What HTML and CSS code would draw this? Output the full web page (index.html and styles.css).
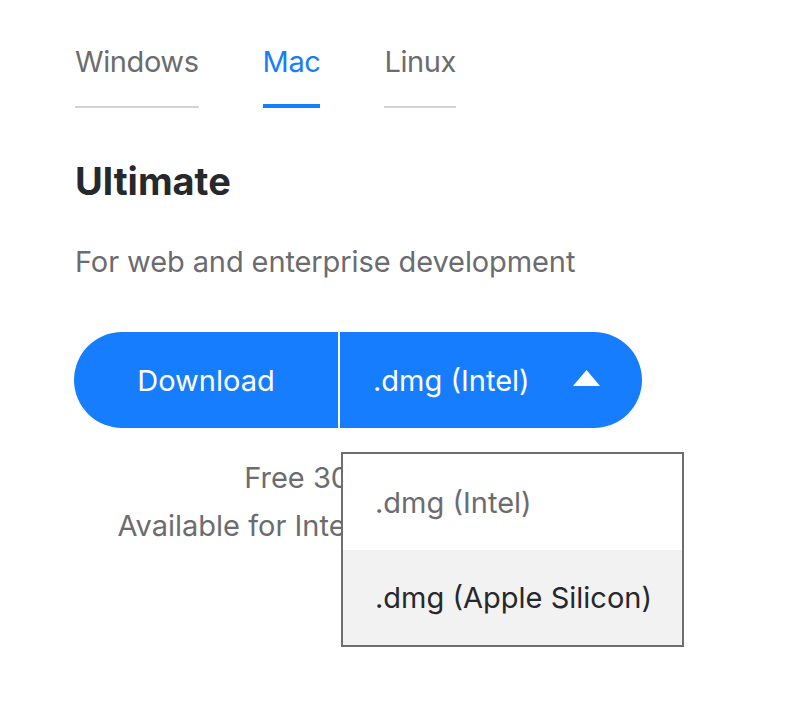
FILE: index.html
```html
<!DOCTYPE html>
<html lang="en">
<head>
<meta charset="utf-8">
<title>Download</title>
<link rel="stylesheet" href="styles.css">
</head>
<body>
<main class="page">
  <nav class="tabs">
    <a class="tab">Windows</a>
    <a class="tab tab-active">Mac</a>
    <a class="tab">Linux</a>
  </nav>
  <h2 class="edition">Ultimate</h2>
  <p class="desc">For web and enterprise development</p>
  <div class="download">
    <div class="split">
      <button class="split-main">Download</button>
      <span class="split-divider"></span>
      <button class="split-select">
        <span>.dmg (Intel)</span>
        <svg class="caret" width="27" height="16" viewBox="0 0 27 16"><path d="M13.5 0 L27 16 L0 16 Z" fill="#fff"/></svg>
      </button>
      <ul class="menu">
        <li class="menu-item">.dmg (Intel)</li>
        <li class="menu-item menu-item-hover">.dmg (Apple Silicon)</li>
      </ul>
    </div>
    <p class="note">Free 30-day trial<br>Available for Intel and Apple Silicon</p>
  </div>
</main>
</body>
</html>
```

FILE: styles.css
```css
* { box-sizing: border-box; }

html, body {
  margin: 0;
  background: #ffffff;
}

body {
  font-family: Inter, "Noto Sans", sans-serif;
  color: #27282c;
}

.page {
  min-height: 722px;
  padding: 0 0 0 75px;
}

.tabs {
  display: flex;
  gap: 64px;
  padding-top: 44px;
}

.tab {
  font-size: 29px;
  line-height: 36px;
  letter-spacing: -0.4px;
  color: #6c6c70;
  padding-bottom: 26px;
  border-bottom: 2px solid #d4d4d4;
}

.tab-active {
  color: #167dff;
  padding-bottom: 24px;
  border-bottom: 4px solid #167dff;
}

.edition {
  margin: 50px 0 0;
  font-size: 38px;
  line-height: 46px;
  font-weight: 700;
  color: #27282c;
}

.desc {
  margin: 40px 0 0;
  font-size: 29px;
  line-height: 36px;
  letter-spacing: -0.1px;
  color: #6c6c70;
}

.download {
  margin-top: 52px;
  width: 568px;
  margin-left: -1px;
}

.split {
  position: relative;
  display: flex;
  height: 96px;
  border-radius: 48px;
  background: #167dff;
}

.split-main,
.split-select {
  border: 0;
  background: transparent;
  color: #ffffff;
  font-family: inherit;
  font-size: 29px;
  padding: 0;
  display: flex;
  align-items: center;
}

.split-main {
  width: 264px;
  justify-content: center;
}

.split-divider {
  width: 2px;
  background: #ffffff;
}

.split-select {
  flex: 1;
  padding: 0 42px 0 33px;
  justify-content: space-between;
}

.caret {
  display: block;
  margin-top: -4px;
}

.menu {
  position: absolute;
  left: 267px;
  top: 120px;
  width: 343px;
  margin: 0;
  padding: 0;
  list-style: none;
  background: #ffffff;
  border: 2px solid #6e6e70;
  z-index: 2;
}

.menu-item {
  height: 96px;
  display: flex;
  align-items: center;
  padding-left: 32px;
  font-size: 29px;
  color: #6c6c70;
}

.menu-item + .menu-item {
  height: 95px;
}

.menu-item-hover {
  background: #f2f2f2;
  color: #27282c;
}

.note {
  margin: 26px 0 0;
  text-align: center;
  font-size: 29px;
  line-height: 48px;
  color: #6c6c70;
}
```
